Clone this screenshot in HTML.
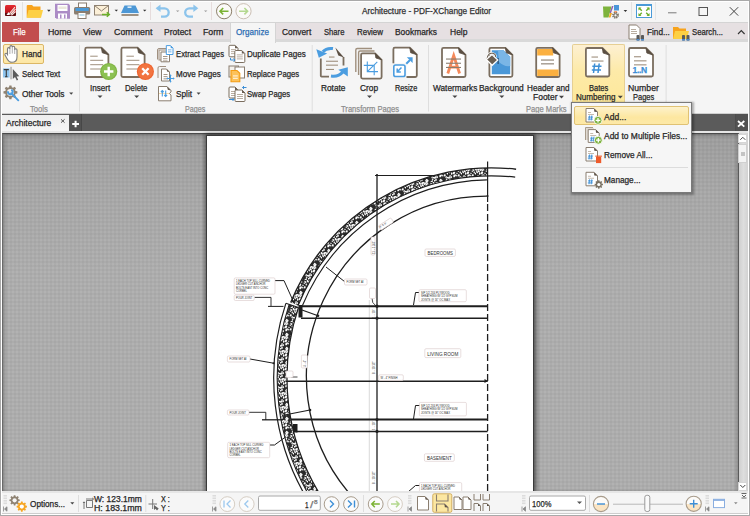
<!DOCTYPE html>
<html><head><meta charset="utf-8">
<style>
*{margin:0;padding:0;box-sizing:border-box}
html,body{width:750px;height:516px;overflow:hidden;background:#f5f5f5;font-family:"Liberation Sans",sans-serif;color:#262626}
.a{position:absolute}
.t{position:absolute;white-space:nowrap;transform-origin:0 0;-webkit-text-stroke:0.25px currentColor}
svg{position:absolute;overflow:visible}
</style></head><body>

<div class="a" style="left:0;top:0;width:750px;height:516px;border:1px solid #a9a9a9"></div>
<div class="a" style="left:1px;top:1px;width:748px;height:514px;border:1px solid #fff"></div>
<svg style="left:0;top:0" width="750" height="22" viewBox="0 0 750 22">
 <defs>
  <linearGradient id="appg" x1="0" y1="0" x2="0" y2="1"><stop offset="0" stop-color="#e42a30"/><stop offset="0.55" stop-color="#c41a20"/><stop offset="1" stop-color="#8a1014"/></linearGradient>
 </defs>
 <rect x="5" y="5" width="11" height="11" rx="1.5" fill="url(#appg)"/>
 <path d="M5 13 L16 13 L16 14.5 Q16 16 14.5 16 L6.5 16 Q5 16 5 14.5Z" fill="#5e0a0e"/>
 <path d="M9 14 L15 7.2 M10.5 14.5 L15.5 9.2 M11.5 15.3 L15.5 11.5" stroke="#f6e6e0" stroke-width="1.1"/>
 <path d="M6.5 15 L8.5 12 L10 15Z" fill="#fff"/>
 <rect x="22" y="2" width="1" height="18" fill="#e2e2e2"/>
 <!-- folder -->
 <path d="M26.7 6 Q26.7 5 27.7 5 L32 5 L33.5 6.5 L40.5 6.5 L40.5 17.5 L26.7 17.5Z" fill="#f7a31c"/>
 <path d="M28.5 10 L43 10 L41 17.7 L26.7 17.7Z" fill="#fdd043"/>
 <path d="M47 9.7 L50.7 9.7 L48.85 11.7Z" fill="#333"/>
 <!-- save -->
 <path d="M55 3.7 L68.5 3.7 L70 5.2 L70 18.7 L56.5 18.7 L55 17.2Z" fill="#ac8cc6"/>
 <rect x="57.5" y="5" width="10" height="6" fill="#fff"/>
 <rect x="58.5" y="6.5" width="8" height="2.5" fill="#ebe8dc"/>
 <rect x="58" y="13.5" width="9" height="5.2" fill="#fff"/>
 <rect x="60" y="14.5" width="1.5" height="4" fill="#ac8cc6"/><rect x="64" y="14.5" width="1.5" height="4" fill="#ac8cc6"/>
 <!-- print -->
 <rect x="78.5" y="3" width="8" height="5" fill="#fff" stroke="#8a7e70" stroke-width="1"/>
 <rect x="74" y="7" width="16.2" height="7.5" rx="1.5" fill="#8a7e70"/>
 <rect x="75.5" y="8" width="13.2" height="3" fill="#4a9ad8"/>
 <rect x="78" y="12.5" width="8" height="6" fill="#fff" stroke="#8a7e70" stroke-width="1"/>
 <rect x="79.5" y="14" width="5" height="2" fill="#bfe0f0"/>
 <!-- email -->
 <rect x="94.5" y="5.5" width="14" height="9.5" fill="#fcf0d8" stroke="#8f8272" stroke-width="1"/>
 <path d="M94.5 5.5 L101.5 11 L108.5 5.5" fill="none" stroke="#8f8272" stroke-width="1"/>
 <path d="M102 14.5 L109 14.5 M106.8 12.3 L109.3 14.5 L106.8 16.7" fill="none" stroke="#6bb02a" stroke-width="1.5"/>
 <path d="M114.6 9.8 L118 9.8 L116.3 11.6Z" fill="#333"/>
 <!-- scanner -->
 <path d="M124.5 5.5 L135.5 5.5 L139 13 L121 13Z" fill="#4d98d6"/>
 <rect x="127.5" y="6.5" width="4" height="1.3" fill="#fff"/>
 <rect x="121" y="13" width="18" height="1.2" fill="#e8f2fa"/>
 <rect x="121.5" y="14.2" width="17" height="1.6" fill="#8a7a66"/>
 <path d="M143 9.8 L146.4 9.8 L144.7 11.6Z" fill="#333"/>
 <rect x="150" y="2" width="1" height="18" fill="#e6dcdc"/>
 <!-- undo -->
 <path d="M157.5 8.3 L164.5 8.3 A4.2 4.2 0 0 1 164.5 16.7 L161 16.7" fill="none" stroke="#8cc4ec" stroke-width="2.3"/>
 <path d="M155.6 8.3 L160.5 4.5 L160.5 12.1Z" fill="#8cc4ec"/>
 <path d="M176 10.5 L179.4 10.5 L177.7 12.1Z" fill="#999"/>
 <!-- redo -->
 <path d="M196.4 8.3 L189.4 8.3 A4.2 4.2 0 0 0 189.4 16.7 L193 16.7" fill="none" stroke="#8cc4ec" stroke-width="2.3"/>
 <path d="M198.3 8.3 L193.4 4.5 L193.4 12.1Z" fill="#8cc4ec"/>
 <path d="M204 10.5 L207.4 10.5 L205.7 12.1Z" fill="#999"/>
 <rect x="211" y="2" width="1" height="18" fill="#e6dcdc"/>
 <!-- back/forward -->
 <circle cx="224.1" cy="11.2" r="7.6" fill="#fbfaf8" stroke="#8c7f6a" stroke-width="1"/>
 <path d="M220 11.2 L228.5 11.2 M223.2 8 L220 11.2 L223.2 14.4" fill="none" stroke="#7bb233" stroke-width="1.6"/>
 <circle cx="243.5" cy="11.2" r="7.6" fill="#fbfaf8" stroke="#cbbfb4" stroke-width="1"/>
 <path d="M247.6 11.2 L239.1 11.2 M244.4 8 L247.6 11.2 L244.4 14.4" fill="none" stroke="#b4d890" stroke-width="1.6"/>
 <!-- right icons -->
 <path d="M603 6.5 L611.5 6.5 L608.5 17.5 L603.5 17.5Z" fill="#7db33c"/>
 <path d="M612 6 L613.5 6 L611 13 L609.5 13Z" fill="#8d5fb0"/>
 <rect x="614" y="5" width="5" height="5.5" fill="#4b96d8"/>
 <path d="M610 13 L612 13 L610.5 17.5 L608.8 17.5Z" fill="#f6a51c"/>
 <rect x="614" y="11" width="3" height="2" fill="#f7a070"/>
 <g transform="translate(615.5,15.3)"><circle r="2.6" fill="none" stroke="#7a7264" stroke-width="1.6" stroke-dasharray="1.3 0.75"/><circle r="1.6" fill="none" stroke="#7a7264" stroke-width="1"/></g>
 <path d="M623.6 10 L627.2 10 L625.4 12Z" fill="#333"/>
 <rect x="631" y="2" width="1" height="18" fill="#e2e2e2"/>
 <rect x="636.5" y="4.5" width="15" height="13" fill="#fff" stroke="#4a9ad8" stroke-width="1"/>
 <rect x="636.5" y="4.5" width="15" height="1.5" fill="#4a9ad8"/>
 <path d="M638.5 7.5 L641.5 7.5 L638.5 10.5Z M649.5 7.5 L646.5 7.5 L649.5 10.5Z M638.5 16 L641.5 16 L638.5 13Z M649.5 16 L646.5 16 L649.5 13Z" fill="#6cae2c"/>
 <path d="M639 8 L641.8 10.8 M649 8 L646.2 10.8 M639 15.5 L641.8 12.7 M649 15.5 L646.2 12.7" stroke="#6cae2c" stroke-width="1.4"/>
 <rect x="655" y="2" width="1" height="18" fill="#e6e6e6"/>
 <rect x="668" y="12.3" width="8.5" height="1" fill="#7a7a7a"/>
 <rect x="699" y="7.5" width="8.5" height="8" fill="none" stroke="#555" stroke-width="1"/>
 <path d="M729.8 7.2 L738.2 15.6 M738.2 7.2 L729.8 15.6" stroke="#444" stroke-width="1"/>
</svg>
<div class="t" style="left:362.40px;top:6.97px;font-size:8.90px;line-height:8.90px;color:#303030;font-weight:normal;transform:scaleX(0.9314);">Architecture - PDF-XChange Editor</div>
<div class="a" style="left:2px;top:22px;width:746px;height:1px;background:#d4d4d4"></div>
<div class="a" style="left:2px;top:23px;width:746px;height:16px;background:#e6e0e2"></div>
<div class="a" style="left:2px;top:39px;width:746px;height:3px;background:#d9d9d9"></div>
<div class="a" style="left:2px;top:22px;width:37px;height:20px;background:#c24e4e"></div>
<div class="a" style="left:230px;top:22px;width:45.5px;height:21px;background:#f5f5f5;border:1px solid #d4d4d4;border-bottom:none"></div>
<div class="t" style="left:13.40px;top:28.38px;font-size:9.00px;line-height:9.00px;color:#ffffff;font-weight:normal;transform:scaleX(0.8818);">File</div>
<div class="t" style="left:47.50px;top:28.38px;font-size:9.00px;line-height:9.00px;color:#262626;font-weight:normal;transform:scaleX(0.9785);">Home</div>
<div class="t" style="left:83.20px;top:28.38px;font-size:9.00px;line-height:9.00px;color:#262626;font-weight:normal;transform:scaleX(0.9608);">View</div>
<div class="t" style="left:113.60px;top:28.38px;font-size:9.00px;line-height:9.00px;color:#262626;font-weight:normal;transform:scaleX(0.9842);">Comment</div>
<div class="t" style="left:164.00px;top:28.38px;font-size:9.00px;line-height:9.00px;color:#262626;font-weight:normal;transform:scaleX(0.9468);">Protect</div>
<div class="t" style="left:203.00px;top:28.38px;font-size:9.00px;line-height:9.00px;color:#262626;font-weight:normal;transform:scaleX(0.9714);">Form</div>
<div class="t" style="left:281.80px;top:28.38px;font-size:9.00px;line-height:9.00px;color:#262626;font-weight:normal;transform:scaleX(0.9265);">Convert</div>
<div class="t" style="left:323.60px;top:28.38px;font-size:9.00px;line-height:9.00px;color:#262626;font-weight:normal;transform:scaleX(0.8489);">Share</div>
<div class="t" style="left:357.00px;top:28.38px;font-size:9.00px;line-height:9.00px;color:#262626;font-weight:normal;transform:scaleX(0.8809);">Review</div>
<div class="t" style="left:395.00px;top:28.38px;font-size:9.00px;line-height:9.00px;color:#262626;font-weight:normal;transform:scaleX(0.9330);">Bookmarks</div>
<div class="t" style="left:449.50px;top:28.38px;font-size:9.00px;line-height:9.00px;color:#262626;font-weight:normal;transform:scaleX(0.9451);">Help</div>
<div class="t" style="left:646.50px;top:28.38px;font-size:9.00px;line-height:9.00px;color:#262626;font-weight:normal;transform:scaleX(0.9154);">Find...</div>
<div class="t" style="left:691.60px;top:28.38px;font-size:9.00px;line-height:9.00px;color:#262626;font-weight:normal;transform:scaleX(0.8604);">Search...</div>
<div class="t" style="left:236.20px;top:28.38px;font-size:9.00px;line-height:9.00px;color:#2b6cb3;font-weight:normal;transform:scaleX(0.9033);">Organize</div>
<svg style="left:0;top:0" width="750" height="45">
 <path d="M629 25 L636.5 25 L640 28.5 L640 39 L629 39 Z" fill="#fff" stroke="#8a7e70" stroke-width="1"/>
 <rect x="631" y="29" width="5" height="0.8" fill="#a89a8a"/><rect x="631" y="31" width="6" height="0.8" fill="#a89a8a"/><rect x="631" y="33" width="6" height="0.8" fill="#a89a8a"/>
 <rect x="636.5" y="35" width="3" height="5.5" rx="0.8" fill="#5a5a5a"/><rect x="641" y="35" width="3" height="5.5" rx="0.8" fill="#5a5a5a"/>
 <rect x="636.5" y="39" width="3" height="1.5" fill="#4a8ad0"/><rect x="641" y="39" width="3" height="1.5" fill="#4a8ad0"/>
 <path d="M673 27 L678 27 L679.5 28.5 L686 28.5 L686 39 L673 39Z" fill="#f7a31c"/>
 <path d="M675 31 L689 31 L687 39 L673 39Z" fill="#fdd043"/>
 <rect x="682" y="35" width="3" height="5.5" rx="0.8" fill="#5a5a5a"/><rect x="686.5" y="35" width="3" height="5.5" rx="0.8" fill="#5a5a5a"/>
 <rect x="682" y="39" width="3" height="1.5" fill="#4a8ad0"/><rect x="686.5" y="39" width="3" height="1.5" fill="#4a8ad0"/>
 <path d="M738 34 L741.3 30.5 L744.6 34" fill="none" stroke="#333" stroke-width="1.1"/>
</svg>
<div class="a" style="left:2px;top:113px;width:746px;height:2px;background:#d6d6d6"></div>
<div class="a" style="left:2.5px;top:44.4px;width:41.5px;height:19.2px;border:1px solid #dcb765;border-radius:2px;background:linear-gradient(#fdefc4,#fde7a4)"></div>
<div class="a" style="left:571.7px;top:44.3px;width:53px;height:58.7px;border:1px solid #e6cf94;border-bottom:none;border-radius:2px 2px 0 0;background:linear-gradient(#fdf0d2 0%,#fdeaa8 45%,#fde89a 100%)"></div>
<svg style="left:0;top:0" width="750" height="115">
<rect x="79.0" y="45" width="1" height="66.5" fill="#dedede"/>
<rect x="311.7" y="45" width="1" height="66.5" fill="#dedede"/>
<rect x="428.0" y="45" width="1" height="66.5" fill="#dedede"/>
<rect x="665.6" y="45" width="1" height="66.5" fill="#dedede"/>
<path d="M7.5 53 L7.5 49 Q7.5 47.6 8.7 47.6 Q9.9 47.6 9.9 49 L9.9 47 Q9.9 45.6 11.1 45.6 Q12.3 45.6 12.3 47 L12.3 47.5 Q12.3 46.3 13.5 46.3 Q14.7 46.3 14.7 47.6 L14.7 50 Q14.7 48.8 15.8 48.8 Q17 48.8 17 50 L17 57 Q17 62.3 12 62.3 Q9 62.3 7.5 59.5 L5 55 Q4.6 53.8 5.6 53.4 Q6.6 53 7.5 54.5 Z" fill="#fff" stroke="#7c7c7c" stroke-width="1.1"/>
<path d="M9.9 49 L9.9 54 M12.3 47.5 L12.3 53.5 M14.7 50 L14.7 54" stroke="#9a9a9a" stroke-width="0.8"/>
<rect x="3" y="68.4" width="6.6" height="9.1" fill="#8ec4ee"/>
<path d="M3.8 69.6 L8.8 69.6 M6.3 69.6 L6.3 76.8 M5 76.8 L7.6 76.8" stroke="#3a3a3a" stroke-width="1.1" fill="none"/>
<rect x="10.3" y="66.8" width="1.5" height="12.5" fill="#b0b0b0"/>
<path d="M12.8 69 L12.8 79 L15 77 L16.8 80.5 L18.2 79.8 L16.5 76.5 L19.3 76.3 Z" fill="#5a5a5a"/>
<path d="M15.51 90.99 L17.32 91.35 L17.32 93.45 L15.51 93.81 L15.01 95.01 L16.04 96.55 L14.55 98.04 L13.01 97.01 L11.81 97.51 L11.45 99.32 L9.35 99.32 L8.99 97.51 L7.79 97.01 L6.25 98.04 L4.76 96.55 L5.79 95.01 L5.29 93.81 L3.48 93.45 L3.48 91.35 L5.29 90.99 L5.79 89.79 L4.76 88.25 L6.25 86.76 L7.79 87.79 L8.99 87.29 L9.35 85.48 L11.45 85.48 L11.81 87.29 L13.01 87.79 L14.55 86.76 L16.04 88.25 L15.01 89.79Z" fill="#8f8373"/><circle cx="10.40" cy="92.40" r="3.40" fill="#f5f5f5"/>
<path d="M11.2 93.2 L18.3 100.3" stroke="#4b9de0" stroke-width="1.9" stroke-linecap="round"/>
<path d="M8.2 91.2 A2.3 2.3 0 1 0 11.2 89.8" fill="none" stroke="#4b9de0" stroke-width="1.9"/>
<path d="M69.20 92.50 L73.20 92.50 L71.20 94.70Z" fill="#444"/>
<path d="M196.60 92.50 L200.60 92.50 L198.60 94.70Z" fill="#444"/>
<path d="M86.70 47.70 L101.40 47.70 L108.40 54.70 L108.40 75.50 Q108.40 77.00 106.90 77.00 L86.70 77.00 Q85.20 77.00 85.20 75.50 L85.20 49.20 Q85.20 47.70 86.70 47.70Z" fill="#fff" stroke="#7b6e5f" stroke-width="1.80" stroke-linejoin="round"/><rect x="90.2" y="55.7" width="7.5" height="1" fill="#a0907e"/><rect x="90.2" y="59.8" width="13" height="1" fill="#a0907e"/><rect x="90.2" y="64.2" width="13" height="1" fill="#a0907e"/><rect x="90.2" y="68.5" width="13" height="1" fill="#a0907e"/><path d="M101.40 47.70 L108.40 54.70 L102.24 52.74 Z" fill="#5b4f43" stroke="#5b4f43" stroke-width="0.8" stroke-linejoin="round"/>
<path d="M122.90 47.70 L137.60 47.70 L144.60 54.70 L144.60 75.50 Q144.60 77.00 143.10 77.00 L122.90 77.00 Q121.40 77.00 121.40 75.50 L121.40 49.20 Q121.40 47.70 122.90 47.70Z" fill="#fff" stroke="#7b6e5f" stroke-width="1.80" stroke-linejoin="round"/><rect x="126.4" y="55.7" width="7.5" height="1" fill="#a0907e"/><rect x="126.4" y="59.8" width="13" height="1" fill="#a0907e"/><rect x="126.4" y="64.2" width="13" height="1" fill="#a0907e"/><rect x="126.4" y="68.5" width="13" height="1" fill="#a0907e"/><path d="M137.60 47.70 L144.60 54.70 L138.44 52.74 Z" fill="#5b4f43" stroke="#5b4f43" stroke-width="0.8" stroke-linejoin="round"/>
<circle cx="108.7" cy="71.5" r="8.6" fill="#7fb341"/><circle cx="108.7" cy="71.5" r="7.4" fill="#8cc152"/>
<path d="M104 71.5 L113.4 71.5 M108.7 66.8 L108.7 76.2" stroke="#fff" stroke-width="2.4"/>
<circle cx="145.4" cy="71.5" r="8.6" fill="#ee6530"/><circle cx="145.4" cy="71.5" r="7.4" fill="#f27440"/>
<path d="M142.2 68.3 L148.6 74.7 M148.6 68.3 L142.2 74.7" stroke="#fff" stroke-width="2.3"/>
<path d="M97.50 95.50 L102.50 95.50 L100.00 98.10Z" fill="#444"/>
<path d="M134.20 95.50 L139.20 95.50 L136.70 98.10Z" fill="#444"/>
<path d="M157.5 59.5 L157.5 50 Q157.5 48.5 159 48.5 L166 48.5" fill="none" stroke="#a09080" stroke-width="1"/>
<rect x="159" y="50" width="8" height="10" fill="#f6f3ee" stroke="#a09080" stroke-width="1"/>
<path d="M161.0 52.0 L167.5 52.0 L169.5 54.0 L169.5 61.8 L161.0 61.8 Z" fill="#fff" stroke="#8a7e70" stroke-width="1.0" stroke-linejoin="round"/><rect x="163.0" y="56.1" width="4.5" height="0.9" fill="#9a8c7c"/><rect x="163.0" y="58.3" width="4.5" height="0.9" fill="#9a8c7c"/><rect x="163.0" y="60.5" width="4.5" height="0.9" fill="#9a8c7c"/>
<path d="M166.3 45.6 L170.5 45.6 L173.0 48.1 L173.0 54.5 L166.3 54.5 Z" fill="#fff" stroke="#4b9de0" stroke-width="1.0" stroke-linejoin="round"/>
<path d="M170.5 45.6 L173 48.1 L170.8 48.3Z" fill="#4b9de0"/><rect x="168" y="49.5" width="3.5" height="0.8" fill="#4b9de0"/><rect x="168" y="51.5" width="3.5" height="0.8" fill="#4b9de0"/>
<path d="M158 78 L158 68 Q158 66.5 159.5 66.5 L166 66.5" fill="none" stroke="#a09080" stroke-width="1"/>
<path d="M161.5 69.0 L166.5 69.0 L169.5 72.0 L169.5 81.0 L161.5 81.0 Z" fill="#fff" stroke="#8a7e70" stroke-width="1.0" stroke-linejoin="round"/><path d="M166.5 69.0 L169.5 72.0 L167.1 71.4 Z" fill="#5b4f43"/><rect x="163.5" y="74.0" width="4.0" height="0.9" fill="#9a8c7c"/><rect x="163.5" y="76.2" width="4.0" height="0.9" fill="#9a8c7c"/><rect x="163.5" y="78.4" width="4.0" height="0.9" fill="#9a8c7c"/>
<path d="M167 78.5 L174 78.5 M170.5 75 L170.5 82" stroke="#4b9de0" stroke-width="1"/>
<path d="M166.3 78.5 L167.8 77.3 L167.8 79.7Z M174.7 78.5 L173.2 77.3 L173.2 79.7Z M170.5 74.3 L169.3 75.8 L171.7 75.8Z M170.5 82.7 L169.3 81.2 L171.7 81.2Z" fill="#4b9de0"/>
<path d="M158.5 86.5 L167 86.5 L171 90.5 L171 92 L169.3 93.5 L171 95 L171 100.8 L158.5 100.8 Z" fill="#fff" stroke="#8a7e70" stroke-width="1"/>
<path d="M167 86.5 L171 90.5 L167.8 89.8Z" fill="#5b4f43"/>
<path d="M159.5 93.5 L168.5 93.5" stroke="#f6a623" stroke-width="0.8" stroke-dasharray="1 1"/>
<path d="M162.3 96.5 L162.3 90.5 M160.9 92 L162.3 90.5 L163.7 92 M165.7 90.5 L165.7 96.5 M164.3 95 L165.7 96.5 L167.1 95" stroke="#4b9de0" stroke-width="1.1" fill="none"/>
<path d="M230.00 45.30 L235.00 45.30 L238.00 48.30 L238.00 55.80 Q238.00 56.80 237.00 56.80 L230.00 56.80 Q229.00 56.80 229.00 55.80 L229.00 46.30 Q229.00 45.30 230.00 45.30Z" fill="#fff" stroke="#7b6e5f" stroke-width="1.00"/><path d="M235.00 45.30 L238.00 48.30 L235.00 48.30 Z" fill="#6a5e52"/><rect x="231.00" y="49.30" width="5.00" height="0.8" fill="#a89a8a"/><rect x="231.00" y="51.30" width="5.00" height="0.8" fill="#a89a8a"/><rect x="231.00" y="53.30" width="5.00" height="0.8" fill="#a89a8a"/>
<path d="M235.80 50.50 L241.80 50.50 L244.80 53.50 L244.80 61.50 Q244.80 62.50 243.80 62.50 L235.80 62.50 Q234.80 62.50 234.80 61.50 L234.80 51.50 Q234.80 50.50 235.80 50.50Z" fill="#fff" stroke="#7b6e5f" stroke-width="1.00"/><path d="M241.80 50.50 L244.80 53.50 L241.80 53.50 Z" fill="#6a5e52"/><rect x="236.80" y="54.50" width="6.00" height="0.8" fill="#a89a8a"/><rect x="236.80" y="56.50" width="6.00" height="0.8" fill="#a89a8a"/><rect x="236.80" y="58.50" width="6.00" height="0.8" fill="#a89a8a"/>
<path d="M230.5 58 L230.5 60 L235 60 M233.5 58.5 L235 60 L233.5 61.5" stroke="#3d8fd6" stroke-width="1" fill="none"/>
<rect x="229" y="66" width="9.5" height="11" fill="#f4f1ec" stroke="#8a7e70" stroke-width="1"/>
<rect x="235" y="67" width="9.5" height="11" fill="#fff" stroke="#8a7e70" stroke-width="1"/>
<path d="M231 70.5 L237 70.5 L239.8 73.3 L239.8 81.8 L231 81.8 Z" fill="#fcc25a" stroke="#f39c12" stroke-width="1.1"/>
<rect x="233" y="75.5" width="4.8" height="0.9" fill="#fff"/><rect x="233" y="77.8" width="4.8" height="0.9" fill="#fff"/>
<path d="M230.00 87.00 L235.00 87.00 L238.00 90.00 L238.00 97.00 Q238.00 98.00 237.00 98.00 L230.00 98.00 Q229.00 98.00 229.00 97.00 L229.00 88.00 Q229.00 87.00 230.00 87.00Z" fill="#fff" stroke="#7b6e5f" stroke-width="1.00"/><path d="M235.00 87.00 L238.00 90.00 L235.00 90.00 Z" fill="#6a5e52"/><rect x="231.00" y="91.00" width="5.00" height="0.8" fill="#a89a8a"/><rect x="231.00" y="93.00" width="5.00" height="0.8" fill="#a89a8a"/><rect x="231.00" y="95.00" width="5.00" height="0.8" fill="#a89a8a"/>
<path d="M236.00 90.00 L242.00 90.00 L245.00 93.00 L245.00 100.50 Q245.00 101.50 244.00 101.50 L236.00 101.50 Q235.00 101.50 235.00 100.50 L235.00 91.00 Q235.00 90.00 236.00 90.00Z" fill="#fff" stroke="#7b6e5f" stroke-width="1.00"/><path d="M242.00 90.00 L245.00 93.00 L242.00 93.00 Z" fill="#6a5e52"/><rect x="237.00" y="94.00" width="6.00" height="0.8" fill="#a89a8a"/><rect x="237.00" y="96.00" width="6.00" height="0.8" fill="#a89a8a"/><rect x="237.00" y="98.00" width="6.00" height="0.8" fill="#a89a8a"/>
<path d="M242.5 87.5 L246.5 87.5 M244 86 L242.5 87.5 L244 89" stroke="#3d8fd6" stroke-width="1" fill="none"/>
<path d="M229 99.5 L234 99.5 M232.5 98 L234 99.5 L232.5 101" stroke="#3d8fd6" stroke-width="1" fill="none"/>
<path d="M320.8 58.5 L320.8 75.8 Q320.8 76.6 321.6 76.6 L329 76.6 M343.5 57 L343.5 65.5" stroke="#7b6e5f" stroke-width="1.8" fill="none"/>
<path d="M335.3 47.6 L344 57.4 L338.3 55.6 Z" fill="#5b4f43"/>
<rect x="329.0" y="56.5" width="5.5" height="1.1" fill="#a0907e"/>
<rect x="326.0" y="60.7" width="12.0" height="1.1" fill="#a0907e"/>
<rect x="326.0" y="64.6" width="12.0" height="1.1" fill="#a0907e"/>
<rect x="326.0" y="68.9" width="8.0" height="1.1" fill="#a0907e"/>
<path d="M333 48.6 Q326.5 47.6 322.8 51.8" fill="none" stroke="#4b9de0" stroke-width="3"/>
<path d="M316.3 49.3 L327.2 53.6 L318.8 57.8 Z" fill="#4b9de0"/>
<path d="M331 76 Q338.5 77.2 342.8 72" fill="none" stroke="#4b9de0" stroke-width="3"/>
<path d="M347.8 67.3 L338.3 69.8 L347.8 76.6 Z" fill="#4b9de0"/>
<path d="M355.8 72 L355.8 50 Q355.8 48.5 357.3 48.5 L372 48.5" stroke="#a0907e" stroke-width="1.4" fill="none"/>
<path d="M358.6 75 L358.6 52.5 Q358.6 51 360.1 51 L374.5 51" stroke="#a0907e" stroke-width="1.4" fill="none"/>
<path d="M362.60 53.30 L375.10 53.30 L381.60 59.80 L381.60 77.10 Q381.60 78.60 380.10 78.60 L362.60 78.60 Q361.10 78.60 361.10 77.10 L361.10 54.80 Q361.10 53.30 362.60 53.30Z" fill="#fff" stroke="#7b6e5f" stroke-width="1.80" stroke-linejoin="round"/><path d="M367.3 61.5 L367.3 71.6 L378 71.6 M363.8 65.4 L374.2 65.4 L374.2 75.2 M367.3 71.6 L377.3 61.8" stroke="#4b9de0" stroke-width="1.1" fill="none"/><path d="M375.10 53.30 L381.60 59.80 L375.88 57.98 Z" fill="#5b4f43" stroke="#5b4f43" stroke-width="0.8" stroke-linejoin="round"/>
<path d="M394.90 47.70 L409.80 47.70 L416.80 54.70 L416.80 75.50 Q416.80 77.00 415.30 77.00 L394.90 77.00 Q393.40 77.00 393.40 75.50 L393.40 49.20 Q393.40 47.70 394.90 47.70Z" fill="#fff" stroke="#7b6e5f" stroke-width="1.80" stroke-linejoin="round"/><path d="M409.80 47.70 L416.80 54.70 L410.64 52.74 Z" fill="#5b4f43" stroke="#5b4f43" stroke-width="0.8" stroke-linejoin="round"/>
<rect x="392" y="63.3" width="14.5" height="15" fill="#f5f5f5"/>
<rect x="393.8" y="65" width="11.2" height="11.5" rx="1.8" fill="#fff" stroke="#4b9de0" stroke-width="1.6"/>
<path d="M401.5 67.5 L398 71 M397.2 68.5 L397.2 72 L400.8 72" stroke="#4b9de0" stroke-width="1.5" fill="none"/>
<path d="M406.3 63.8 L410 60" stroke="#4b9de0" stroke-width="2"/><path d="M406.8 57.3 L412.6 57.3 L412.6 63 Z" fill="#4b9de0"/>
<path d="M443.50 47.80 L458.50 47.80 L465.50 54.80 L465.50 75.50 Q465.50 77.00 464.00 77.00 L443.50 77.00 Q442.00 77.00 442.00 75.50 L442.00 49.30 Q442.00 47.80 443.50 47.80Z" fill="#fff" stroke="#7b6e5f" stroke-width="1.80" stroke-linejoin="round"/><path d="M447.8 73.5 L453.7 55.5 L459.6 73.5 M449.5 67.2 L458 67.2" stroke="#f5895a" stroke-width="2.8" fill="none"/><rect x="446" y="58.5" width="15" height="1.1" fill="#8a7e70"/><rect x="446" y="62.7" width="15" height="1.1" fill="#8a7e70"/><rect x="446" y="66.9" width="15" height="1.1" fill="#8a7e70"/><path d="M458.50 47.80 L465.50 54.80 L459.34 52.84 Z" fill="#5b4f43" stroke="#5b4f43" stroke-width="0.8" stroke-linejoin="round"/>
<path d="M490.90 47.80 L505.40 47.80 L512.40 54.80 L512.40 75.30 Q512.40 76.80 510.90 76.80 L490.90 76.80 Q489.40 76.80 489.40 75.30 L489.40 49.30 Q489.40 47.80 490.90 47.80Z" fill="#fff" stroke="#7b6e5f" stroke-width="1.80" stroke-linejoin="round"/><path d="M491.8 50.2 L503.5 50.2 L510.2 56.8 L510.2 74.3 L491.8 74.3 Z" fill="#4a98d8"/><path d="M498 50.2 L503.5 50.2 L510.2 56.8 L510.2 66 Q504 67 499 62 Z" fill="#7ab6e6"/><rect x="497.5" y="58" width="1.2" height="6" fill="#2a4a6a"/><path d="M505.40 47.80 L512.40 54.80 L506.24 52.84 Z" fill="#5b4f43" stroke="#5b4f43" stroke-width="0.8" stroke-linejoin="round"/>
<path d="M487 59 Q488 52.5 492.5 53.3 Q496 54 495.5 57" fill="none" stroke="#fff" stroke-width="2.2"/>
<path d="M487 59 Q488 52.5 492.5 53.3 Q496 54 495.5 57" fill="none" stroke="#6a5f52" stroke-width="1.1"/>
<path d="M486.3 59.5 L492 54.5 L497.8 60 L492.2 65.3 Z" fill="#6a5f52" stroke="#fff" stroke-width="1.2"/>
<path d="M537.70 47.80 L552.60 47.80 L559.60 54.80 L559.60 75.50 Q559.60 77.00 558.10 77.00 L537.70 77.00 Q536.20 77.00 536.20 75.50 L536.20 49.30 Q536.20 47.80 537.70 47.80Z" fill="#fff" stroke="#7b6e5f" stroke-width="1.80" stroke-linejoin="round"/><rect x="537.2" y="49" width="16" height="6.5" fill="#fbb040"/><rect x="537.2" y="69.5" width="21.4" height="6.5" fill="#fbb040"/><rect x="541" y="59.5" width="13" height="1.1" fill="#8a7e70"/><rect x="541" y="63.3" width="13" height="1.1" fill="#8a7e70"/><path d="M552.60 47.80 L559.60 54.80 L553.44 52.84 Z" fill="#5b4f43" stroke="#5b4f43" stroke-width="0.8" stroke-linejoin="round"/>
<path d="M587.40 48.00 L602.30 48.00 L609.30 55.00 L609.30 75.00 Q609.30 76.50 607.80 76.50 L587.40 76.50 Q585.90 76.50 585.90 75.00 L585.90 49.50 Q585.90 48.00 587.40 48.00Z" fill="#fff" stroke="#7b6e5f" stroke-width="1.80" stroke-linejoin="round"/><rect x="591.5" y="56.5" width="6.5" height="1.1" fill="#a0907e"/><rect x="591.5" y="60.5" width="12" height="1.1" fill="#a0907e"/><path d="M594.7 63.5 L593.5 73 M599.2 63.5 L598 73 M592.3 66.3 L601.5 66.3 M591.8 70 L601 70" stroke="#3d8fd6" stroke-width="1.5"/><path d="M602.30 48.00 L609.30 55.00 L603.14 53.04 Z" fill="#5b4f43" stroke="#5b4f43" stroke-width="0.8" stroke-linejoin="round"/>
<path d="M630.50 48.00 L646.00 48.00 L653.00 55.00 L653.00 75.00 Q653.00 76.50 651.50 76.50 L630.50 76.50 Q629.00 76.50 629.00 75.00 L629.00 49.50 Q629.00 48.00 630.50 48.00Z" fill="#fff" stroke="#7b6e5f" stroke-width="1.80" stroke-linejoin="round"/><rect x="634" y="56.2" width="7" height="1.1" fill="#a0907e"/><rect x="634" y="60.3" width="12.5" height="1.1" fill="#a0907e"/><rect x="634" y="64.3" width="12.5" height="1.1" fill="#a0907e"/><path d="M646.00 48.00 L653.00 55.00 L646.84 53.04 Z" fill="#5b4f43" stroke="#5b4f43" stroke-width="0.8" stroke-linejoin="round"/>
</svg>
<div class="t" style="left:632.5px;top:65.5px;font-size:8.5px;line-height:9px;color:#3d8fd6;font-weight:bold;letter-spacing:-0.3px">1..N</div>
<div class="t" style="left:22.00px;top:50.48px;font-size:9.00px;line-height:9.00px;color:#262626;font-weight:normal;transform:scaleX(0.9156);">Hand</div>
<div class="t" style="left:22.00px;top:70.48px;font-size:9.00px;line-height:9.00px;color:#262626;font-weight:normal;transform:scaleX(0.8710);">Select Text</div>
<div class="t" style="left:22.00px;top:89.88px;font-size:9.00px;line-height:9.00px;color:#262626;font-weight:normal;transform:scaleX(0.9267);">Other Tools</div>
<div class="t" style="left:175.60px;top:50.48px;font-size:9.00px;line-height:9.00px;color:#262626;font-weight:normal;transform:scaleX(0.8567);">Extract Pages</div>
<div class="t" style="left:175.60px;top:70.48px;font-size:9.00px;line-height:9.00px;color:#262626;font-weight:normal;transform:scaleX(0.8954);">Move Pages</div>
<div class="t" style="left:175.60px;top:89.88px;font-size:9.00px;line-height:9.00px;color:#262626;font-weight:normal;transform:scaleX(0.9135);">Split</div>
<div class="t" style="left:246.60px;top:50.48px;font-size:9.00px;line-height:9.00px;color:#262626;font-weight:normal;transform:scaleX(0.8955);">Duplicate Pages</div>
<div class="t" style="left:246.60px;top:70.48px;font-size:9.00px;line-height:9.00px;color:#262626;font-weight:normal;transform:scaleX(0.8551);">Replace Pages</div>
<div class="t" style="left:246.60px;top:89.88px;font-size:9.00px;line-height:9.00px;color:#262626;font-weight:normal;transform:scaleX(0.8527);">Swap Pages</div>
<div class="t" style="left:29.70px;top:104.88px;font-size:9.00px;line-height:9.00px;color:#8e8e8e;font-weight:normal;transform:scaleX(0.8517);">Tools</div>
<div class="t" style="left:185.20px;top:104.88px;font-size:9.00px;line-height:9.00px;color:#8e8e8e;font-weight:normal;transform:scaleX(0.7912);">Pages</div>
<div class="t" style="left:340.50px;top:104.88px;font-size:9.00px;line-height:9.00px;color:#8e8e8e;font-weight:normal;transform:scaleX(0.8442);">Transform Pages</div>
<div class="t" style="left:526.30px;top:104.88px;font-size:9.00px;line-height:9.00px;color:#8e8e8e;font-weight:normal;transform:scaleX(0.8432);">Page Marks</div>
<div class="t" style="left:89.80px;top:84.18px;font-size:9.00px;line-height:9.00px;color:#262626;font-weight:normal;transform:scaleX(0.9016);">Insert</div>
<div class="t" style="left:125.40px;top:84.18px;font-size:9.00px;line-height:9.00px;color:#262626;font-weight:normal;transform:scaleX(0.8610);">Delete</div>
<div class="t" style="left:320.70px;top:84.18px;font-size:9.00px;line-height:9.00px;color:#262626;font-weight:normal;transform:scaleX(0.9234);">Rotate</div>
<div class="t" style="left:360.40px;top:84.18px;font-size:9.00px;line-height:9.00px;color:#262626;font-weight:normal;transform:scaleX(0.9275);">Crop</div>
<div class="t" style="left:395.00px;top:84.18px;font-size:9.00px;line-height:9.00px;color:#262626;font-weight:normal;transform:scaleX(0.8104);">Resize</div>
<div class="t" style="left:432.50px;top:84.18px;font-size:9.00px;line-height:9.00px;color:#262626;font-weight:normal;transform:scaleX(0.9196);">Watermarks</div>
<div class="t" style="left:479.40px;top:84.18px;font-size:9.00px;line-height:9.00px;color:#262626;font-weight:normal;transform:scaleX(0.9324);">Background</div>
<div class="t" style="left:527.40px;top:84.18px;font-size:9.00px;line-height:9.00px;color:#262626;font-weight:normal;transform:scaleX(0.9055);">Header and</div>
<div class="t" style="left:532.70px;top:93.18px;font-size:9.00px;line-height:9.00px;color:#262626;font-weight:normal;transform:scaleX(0.9417);">Footer</div>
<div class="t" style="left:588.80px;top:84.18px;font-size:9.00px;line-height:9.00px;color:#262626;font-weight:normal;transform:scaleX(0.8342);">Bates</div>
<div class="t" style="left:576.00px;top:93.18px;font-size:9.00px;line-height:9.00px;color:#262626;font-weight:normal;transform:scaleX(0.8971);">Numbering</div>
<div class="t" style="left:627.80px;top:84.18px;font-size:9.00px;line-height:9.00px;color:#262626;font-weight:normal;transform:scaleX(0.9652);">Number</div>
<div class="t" style="left:632.50px;top:93.18px;font-size:9.00px;line-height:9.00px;color:#262626;font-weight:normal;transform:scaleX(0.8343);">Pages</div>
<svg style="left:0;top:0" width="750" height="115"><path d="M367.00 95.50 L372.00 95.50 L369.50 98.10Z" fill="#444"/><path d="M452.40 95.50 L457.40 95.50 L454.90 98.10Z" fill="#444"/><path d="M499.30 95.50 L504.30 95.50 L501.80 98.10Z" fill="#444"/><path d="M559.00 95.80 L564.00 95.80 L561.50 98.40Z" fill="#444"/><path d="M617.80 95.80 L622.80 95.80 L620.30 98.40Z" fill="#444"/></svg>
<div class="a" style="left:2px;top:113px;width:746px;height:1px;background:#cfcfcf"></div>
<div class="a" style="left:2px;top:114px;width:746px;height:17px;background:#5b5b5b"></div>
<div class="a" style="left:69px;top:114px;width:13.3px;height:17px;background:#525252;border-right:1px solid #474747"></div>
<div class="a" style="left:735px;top:114px;width:13px;height:17px;background:#525252;border-left:1px solid #4d4d4d"></div>
<div class="a" style="left:2px;top:115px;width:67px;height:16px;background:linear-gradient(#eeeeee,#f6f6f6)"></div>
<div class="t" style="left:6.00px;top:119.48px;font-size:9.00px;line-height:9.00px;color:#262626;font-weight:normal;transform:scaleX(0.9431);">Architecture</div>
<svg style="left:0;top:0" width="750" height="140">
<path d="M61 119.3 L64.6 122.7 M64.6 119.3 L61 122.7" stroke="#555" stroke-width="1"/>
<path d="M72.2 124 L79 124 M75.6 120.8 L75.6 127.2" stroke="#fff" stroke-width="2"/>
<path d="M738 121 L744.3 126.7 M744.3 121 L738 126.7" stroke="#fff" stroke-width="1.8"/>
</svg>
<div class="a" style="left:2px;top:131px;width:746px;height:2px;background:#e6e6e6"></div>
<div class="a" style="left:2px;top:133px;width:735.5px;height:358px;background-color:#acacac;background-image:linear-gradient(rgba(0,0,0,0.09),rgba(0,0,0,0.03) 60px,rgba(0,0,0,0) 140px),radial-gradient(rgba(255,255,255,0.08) 0.6px,rgba(255,255,255,0) 1.3px),radial-gradient(rgba(0,0,0,0.03) 0.6px,rgba(0,0,0,0) 1.3px);background-size:100% 100%,4px 4px,4px 4px;background-position:0 0,0 0,2px 2px;border-top:1px solid #4a4a4a;border-left:1px solid #6a6a6a;box-shadow:inset 2px 2px 3px rgba(0,0,0,0.18),inset -2px 0 3px rgba(0,0,0,0.18)"></div>
<div class="a" style="left:737.5px;top:133px;width:10.5px;height:358px;background:linear-gradient(90deg,#cfcfcf,#dedede 50%,#d2d2d2);border-left:1px solid #5a5a5a"></div>
<div class="a" style="left:738.3px;top:133.5px;width:9px;height:9px;background:#fff;border:1px solid #d6d6d6"></div>
<div class="a" style="left:738.3px;top:144.3px;width:9px;height:19px;background:#f4f4f4;border:1px solid #d0d0d0"></div><div class="a" style="left:741px;top:151.5px;width:4px;height:4px;background:#c4c4c4"></div>
<div class="a" style="left:738.3px;top:482.2px;width:9px;height:9px;background:#fff;border:1px solid #d6d6d6"></div>
<svg style="left:0;top:0" width="750" height="516">
<path d="M740.3 139.8 L742.8 137.3 L745.3 139.8" fill="none" stroke="#444" stroke-width="1"/>
<path d="M740.3 485 L742.8 487.5 L745.3 485" fill="none" stroke="#444" stroke-width="1"/>
</svg>
<div class="a" style="left:205.5px;top:135px;width:328.5px;height:356px;background:#fff;border:1px solid #3a3a3a;border-bottom:none;box-shadow:-1px 0 3px 1px rgba(0,0,0,.3),2px 0 4px 1px rgba(0,0,0,.35)"></div>
<svg style="left:0;top:0" width="750" height="516"><defs><pattern id="spk" patternUnits="userSpaceOnUse" width="14" height="14"><rect width="14" height="14" fill="#2a2a2a"/><ellipse cx="4.53" cy="2.11" rx="0.99" ry="0.48" transform="rotate(96 4.53 2.11)" fill="#fff"/><ellipse cx="5.12" cy="0.81" rx="0.90" ry="0.46" transform="rotate(78 5.12 0.81)" fill="#fff"/><ellipse cx="0.98" cy="1.27" rx="0.85" ry="0.74" transform="rotate(22 0.98 1.27)" fill="#fff"/><ellipse cx="3.13" cy="8.78" rx="1.17" ry="0.65" transform="rotate(71 3.13 8.78)" fill="#fff"/><ellipse cx="13.67" cy="0.65" rx="1.12" ry="0.55" transform="rotate(26 13.67 0.65)" fill="#fff"/><ellipse cx="1.65" cy="4.32" rx="1.09" ry="0.51" transform="rotate(105 1.65 4.32)" fill="#fff"/><ellipse cx="8.94" cy="5.21" rx="0.93" ry="0.47" transform="rotate(11 8.94 5.21)" fill="#fff"/><ellipse cx="2.88" cy="9.53" rx="0.86" ry="0.56" transform="rotate(105 2.88 9.53)" fill="#fff"/><ellipse cx="6.34" cy="4.20" rx="1.08" ry="0.69" transform="rotate(44 6.34 4.20)" fill="#fff"/><ellipse cx="8.04" cy="7.35" rx="1.13" ry="0.71" transform="rotate(52 8.04 7.35)" fill="#fff"/><ellipse cx="13.72" cy="1.65" rx="0.85" ry="0.71" transform="rotate(27 13.72 1.65)" fill="#fff"/><ellipse cx="6.85" cy="0.55" rx="1.00" ry="0.72" transform="rotate(103 6.85 0.55)" fill="#fff"/><ellipse cx="12.26" cy="4.39" rx="1.02" ry="0.66" transform="rotate(104 12.26 4.39)" fill="#fff"/><ellipse cx="6.39" cy="11.76" rx="1.17" ry="0.62" transform="rotate(120 6.39 11.76)" fill="#fff"/><ellipse cx="0.85" cy="9.82" rx="0.99" ry="0.80" transform="rotate(148 0.85 9.82)" fill="#fff"/><ellipse cx="3.98" cy="5.40" rx="1.00" ry="0.46" transform="rotate(83 3.98 5.40)" fill="#fff"/><ellipse cx="2.35" cy="1.64" rx="0.64" ry="0.72" transform="rotate(23 2.35 1.64)" fill="#fff"/><ellipse cx="3.47" cy="5.47" rx="1.12" ry="0.48" transform="rotate(81 3.47 5.47)" fill="#fff"/><ellipse cx="7.69" cy="12.37" rx="1.09" ry="0.75" transform="rotate(50 7.69 12.37)" fill="#fff"/><ellipse cx="5.81" cy="5.02" rx="1.13" ry="0.79" transform="rotate(27 5.81 5.02)" fill="#fff"/><ellipse cx="2.47" cy="3.25" rx="0.74" ry="0.62" transform="rotate(106 2.47 3.25)" fill="#fff"/><ellipse cx="3.68" cy="0.06" rx="0.85" ry="0.58" transform="rotate(102 3.68 0.06)" fill="#fff"/><ellipse cx="13.34" cy="9.67" rx="0.91" ry="0.67" transform="rotate(122 13.34 9.67)" fill="#fff"/><ellipse cx="0.76" cy="12.59" rx="1.07" ry="0.76" transform="rotate(144 0.76 12.59)" fill="#fff"/><ellipse cx="5.49" cy="5.59" rx="0.66" ry="0.67" transform="rotate(11 5.49 5.59)" fill="#fff"/><ellipse cx="0.94" cy="2.92" rx="0.70" ry="0.57" transform="rotate(9 0.94 2.92)" fill="#fff"/><ellipse cx="0.00" cy="2.12" rx="0.66" ry="0.58" transform="rotate(5 0.00 2.12)" fill="#fff"/><ellipse cx="12.24" cy="8.60" rx="0.69" ry="0.54" transform="rotate(63 12.24 8.60)" fill="#fff"/><ellipse cx="5.10" cy="1.72" rx="1.11" ry="0.80" transform="rotate(84 5.10 1.72)" fill="#fff"/><ellipse cx="6.77" cy="1.20" rx="0.66" ry="0.57" transform="rotate(48 6.77 1.20)" fill="#fff"/><ellipse cx="11.60" cy="2.26" rx="0.61" ry="0.78" transform="rotate(95 11.60 2.26)" fill="#fff"/><ellipse cx="2.05" cy="7.60" rx="0.62" ry="0.63" transform="rotate(176 2.05 7.60)" fill="#fff"/><ellipse cx="12.09" cy="9.75" rx="0.76" ry="0.58" transform="rotate(30 12.09 9.75)" fill="#fff"/><ellipse cx="10.81" cy="7.46" rx="1.07" ry="0.57" transform="rotate(40 10.81 7.46)" fill="#fff"/><ellipse cx="11.36" cy="13.79" rx="1.11" ry="0.73" transform="rotate(147 11.36 13.79)" fill="#fff"/><ellipse cx="10.36" cy="3.17" rx="0.91" ry="0.57" transform="rotate(5 10.36 3.17)" fill="#fff"/><ellipse cx="0.39" cy="3.91" rx="0.76" ry="0.69" transform="rotate(172 0.39 3.91)" fill="#fff"/><ellipse cx="6.26" cy="13.12" rx="1.19" ry="0.78" transform="rotate(66 6.26 13.12)" fill="#fff"/><ellipse cx="3.09" cy="3.18" rx="0.72" ry="0.52" transform="rotate(112 3.09 3.18)" fill="#fff"/><ellipse cx="12.60" cy="11.77" rx="0.89" ry="0.68" transform="rotate(144 12.60 11.77)" fill="#fff"/><ellipse cx="1.19" cy="9.25" rx="1.15" ry="0.72" transform="rotate(135 1.19 9.25)" fill="#fff"/><ellipse cx="6.69" cy="2.50" rx="1.07" ry="0.57" transform="rotate(144 6.69 2.50)" fill="#fff"/><ellipse cx="13.60" cy="5.54" rx="0.84" ry="0.78" transform="rotate(130 13.60 5.54)" fill="#fff"/><ellipse cx="2.38" cy="1.78" rx="0.69" ry="0.77" transform="rotate(145 2.38 1.78)" fill="#fff"/><ellipse cx="2.05" cy="11.57" rx="1.19" ry="0.68" transform="rotate(63 2.05 11.57)" fill="#fff"/><ellipse cx="7.68" cy="1.83" rx="0.61" ry="0.79" transform="rotate(117 7.68 1.83)" fill="#fff"/><ellipse cx="7.37" cy="13.07" rx="0.86" ry="0.76" transform="rotate(149 7.37 13.07)" fill="#fff"/><ellipse cx="2.95" cy="3.53" rx="0.78" ry="0.53" transform="rotate(106 2.95 3.53)" fill="#fff"/><ellipse cx="3.63" cy="5.87" rx="0.68" ry="0.77" transform="rotate(64 3.63 5.87)" fill="#fff"/><ellipse cx="6.41" cy="8.17" rx="1.14" ry="0.60" transform="rotate(165 6.41 8.17)" fill="#fff"/><ellipse cx="7.02" cy="7.45" rx="0.91" ry="0.46" transform="rotate(79 7.02 7.45)" fill="#fff"/><ellipse cx="2.56" cy="0.06" rx="1.08" ry="0.51" transform="rotate(85 2.56 0.06)" fill="#fff"/><ellipse cx="10.15" cy="7.79" rx="0.80" ry="0.63" transform="rotate(100 10.15 7.79)" fill="#fff"/><ellipse cx="10.98" cy="1.49" rx="0.94" ry="0.54" transform="rotate(50 10.98 1.49)" fill="#fff"/><ellipse cx="10.81" cy="7.11" rx="0.94" ry="0.72" transform="rotate(164 10.81 7.11)" fill="#fff"/><ellipse cx="6.21" cy="8.58" rx="0.90" ry="0.63" transform="rotate(125 6.21 8.58)" fill="#fff"/><ellipse cx="6.33" cy="7.47" rx="0.89" ry="0.78" transform="rotate(126 6.33 7.47)" fill="#fff"/><ellipse cx="12.27" cy="13.19" rx="0.76" ry="0.65" transform="rotate(170 12.27 13.19)" fill="#fff"/><ellipse cx="11.76" cy="1.92" rx="0.67" ry="0.60" transform="rotate(13 11.76 1.92)" fill="#fff"/><ellipse cx="3.37" cy="1.02" rx="1.00" ry="0.72" transform="rotate(161 3.37 1.02)" fill="#fff"/></pattern><clipPath id="pg"><rect x="206.5" y="136" width="327" height="355"/></clipPath></defs><g clip-path="url(#pg)" fill="none" stroke="#1e1e1e">
<path d="M487.60 168.03 A216.40 216.40 0 0 0 290.84 302.64 L298.06 305.58 A208.60 208.60 0 0 1 487.73 175.83Z" fill="url(#spk)" stroke="none"/>
<path d="M516.10 169.24 A216.60 216.60 0 0 0 290.66 302.56" stroke-width="1.3"/>
<path d="M515.18 177.18 A208.60 208.60 0 0 0 298.06 305.58" stroke-width="1.2"/>
<path d="M486.92 179.84 A204.60 204.60 0 0 0 302.45 305.44" stroke-width="1.1"/>
<path d="M289.37 304.51 A231.60 231.60 0 0 0 312.59 500.73 L320.73 495.64 A222.00 222.00 0 0 1 298.47 307.56Z" fill="url(#spk)" stroke="none"/>
<path d="M285.86 303.34 A235.30 235.30 0 0 0 309.45 502.69" stroke-width="1.2"/>
<path d="M289.18 304.45 A231.80 231.80 0 0 0 312.42 500.84" stroke-width="1.1"/>
<path d="M298.47 307.56 A222.00 222.00 0 0 0 320.73 495.64" stroke-width="1.2"/>
<path d="M285.86 303.34 L298.47 307.56" stroke-width="1.1"/>
<rect x="298.5" y="305" width="4" height="12.5" fill="#1e1e1e" stroke="none"/>
<rect x="293" y="424" width="4.5" height="8.5" fill="#1e1e1e" stroke="none"/>
<path d="M486.80 196.10 A180.40 180.40 0 0 0 348.61 492.46" stroke-width="1.3"/>
<circle cx="487.5" cy="196" r="1.1" fill="#1e1e1e" stroke="none"/>
<path d="M487.6 161.5 L487.6 202" stroke-width="1.2"/>
<path d="M487.6 204 L487.6 491" stroke-width="1.3" stroke-dasharray="7 3"/>
<path d="M377 175.1 L377 491" stroke-width="1.3"/>
<path d="M369.3 300 L369.3 491" stroke-width="0.8" stroke="#cfcfcf"/>
<path d="M375 175.5 L434 175.5" stroke-width="1.2"/>
<circle cx="377" cy="175.1" r="1.1" fill="#1e1e1e" stroke="none"/>
<path d="M301 306.2 L487.6 306.2" stroke-width="2"/>
<path d="M301 318.2 L487.6 318.2" stroke-width="1.5"/>
<path d="M286 381.2 L487.6 381.2" stroke-width="1.4"/>
<path d="M291 419.6 L487.6 419.6" stroke-width="2"/>
<path d="M296 431.4 L487.6 431.4" stroke-width="1.5"/>
<circle cx="377" cy="306.2" r="1.6" fill="#1e1e1e" stroke="none"/>
<circle cx="377" cy="318.2" r="1.6" fill="#1e1e1e" stroke="none"/>
<circle cx="377" cy="419.6" r="1.6" fill="#1e1e1e" stroke="none"/>
<circle cx="377" cy="431.4" r="1.6" fill="#1e1e1e" stroke="none"/>
<path d="M484.5 379 L488 381 L484.5 383" fill="#1e1e1e" stroke="none"/>
<path d="M302 310 L318 315.8" stroke-width="1.2"/><circle cx="318" cy="315.8" r="1.3" fill="#1e1e1e" stroke="none"/>
<path d="M282 415.5 L310 410" stroke-width="1.2"/><circle cx="310" cy="410" r="1.3" fill="#1e1e1e" stroke="none"/>
<path d="M275 280.6 L284 280.6 L294.5 304" stroke-width="1"/>
<path d="M254.5 297.4 L271 297.4 L271 306" stroke-width="0.9"/><path d="M268 306.4 L283.5 306.4" stroke-width="1"/>
<path d="M250 359 L273.5 363.2" stroke-width="1"/><circle cx="273.5" cy="363.2" r="1" fill="#1e1e1e" stroke="none"/>
<path d="M249 412.3 L265.8 412.3 L265.8 420" stroke-width="0.9"/><path d="M262 419.8 L283 419.8" stroke-width="1.3"/>
<path d="M269.7 445 L274.5 445 L285.5 437" stroke-width="1"/>
<path d="M420 292.5 L415.5 292.5 L413.5 305" stroke-width="1"/>
<path d="M420 405.5 L415.5 405.5 L413.5 419" stroke-width="1"/>
<path d="M420 485.5 L415.5 485.5 L408 492" stroke-width="1"/>
<path d="M372 298 Q371.5 303 376 306" stroke-width="0.8"/>
<path d="M291 377 L297.5 377" stroke-width="0.8"/>
<path d="M326 267 L344.5 281.5" stroke-width="1"/>
<rect x="425.0" y="249.0" width="30.4" height="7.4" rx="1.2" fill="#fff" stroke="#d8c8c8" stroke-width="0.6"/>
<rect x="424.8" y="348.7" width="36.0" height="8.9" rx="1.2" fill="#fff" stroke="#d8c8c8" stroke-width="0.6"/>
<rect x="424.4" y="453.8" width="29.9" height="7.5" rx="1.2" fill="#fff" stroke="#d8c8c8" stroke-width="0.6"/>
<rect x="419.0" y="289.7" width="47.3" height="12.0" rx="1.2" fill="#fff" stroke="#d8c8c8" stroke-width="0.6"/>
<rect x="419.4" y="402.4" width="47.0" height="13.5" rx="1.2" fill="#fff" stroke="#d8c8c8" stroke-width="0.6"/>
<rect x="419.4" y="482.6" width="42.3" height="12.4" rx="1.2" fill="#fff" stroke="#d8c8c8" stroke-width="0.6"/>
<rect x="234.2" y="277.9" width="40.8" height="16.3" rx="1.2" fill="#fff" stroke="#d8c8c8" stroke-width="0.6"/>
<rect x="234.2" y="295.1" width="20.0" height="5.4" rx="1.2" fill="#fff" stroke="#d8c8c8" stroke-width="0.6"/>
<rect x="227.4" y="356.0" width="22.6" height="6.0" rx="1.2" fill="#fff" stroke="#d8c8c8" stroke-width="0.6"/>
<rect x="227.4" y="410.0" width="21.6" height="5.0" rx="1.2" fill="#fff" stroke="#d8c8c8" stroke-width="0.6"/>
<rect x="227.7" y="442.3" width="42.0" height="15.4" rx="1.2" fill="#fff" stroke="#d8c8c8" stroke-width="0.6"/>
<rect x="378.7" y="374.8" width="24.6" height="5.6" rx="1.2" fill="#fff" stroke="#d8c8c8" stroke-width="0.6"/>
<rect x="344.5" y="279.0" width="22.5" height="6.0" rx="1.2" fill="#fff" stroke="#d8c8c8" stroke-width="0.6"/>
<rect x="369.5" y="288.0" width="6.0" height="10.5" rx="1.2" fill="#fff" stroke="#d8c8c8" stroke-width="0.6"/>
<rect x="286.0" y="371.0" width="7.0" height="6.4" rx="1.2" fill="#fff" stroke="#d8c8c8" stroke-width="0.6"/>
<g transform="translate(386,224) rotate(-33)"><rect x="-7.5" y="-2.6" width="15.0" height="5.2" rx="1.2" fill="#fff" stroke="#d8c8c8" stroke-width="0.6"/></g>
<g transform="translate(373,246) rotate(-90)"><rect x="-9.0" y="-2.0" width="18.0" height="4.0" rx="1.2" fill="#fff" stroke="#d8c8c8" stroke-width="0.6"/></g>
<g transform="translate(304.4,361.5) rotate(-90)"><rect x="-6.5" y="-3.0" width="13.0" height="6.0" rx="1.2" fill="#fff" stroke="#d8c8c8" stroke-width="0.6"/></g>
</g>
<text x="427.6" y="255.2" font-family="Liberation Sans" font-size="5.4" fill="#303030" letter-spacing="0.00" textLength="25.4" lengthAdjust="spacingAndGlyphs">BEDROOMS</text>
<text x="427.2" y="355.8" font-family="Liberation Sans" font-size="5.4" fill="#303030" letter-spacing="0.00" textLength="31.2" lengthAdjust="spacingAndGlyphs">LIVING ROOM</text>
<text x="427.0" y="460.2" font-family="Liberation Sans" font-size="5.4" fill="#303030" letter-spacing="0.00" textLength="24.8" lengthAdjust="spacingAndGlyphs">BASEMENT</text>
<text x="421.0" y="293.8" font-family="Liberation Sans" font-size="2.7" fill="#2a2a2a" letter-spacing="0.00">SIP 1/2 2X4 PLYWOOD</text>
<text x="421.0" y="297.2" font-family="Liberation Sans" font-size="2.7" fill="#2a2a2a" letter-spacing="0.00">SHEATHING W/ 1/2 GYPSUM</text>
<text x="421.0" y="300.5" font-family="Liberation Sans" font-size="2.7" fill="#2a2a2a" letter-spacing="0.00">JOISTS @ 16" OC MAX</text>
<text x="421.0" y="406.5" font-family="Liberation Sans" font-size="2.7" fill="#2a2a2a" letter-spacing="0.00">SIP 1/2 2X4 PLYWOOD</text>
<text x="421.0" y="410.0" font-family="Liberation Sans" font-size="2.7" fill="#2a2a2a" letter-spacing="0.00">SHEATHING W/ 1/2 GYPSUM</text>
<text x="421.0" y="413.5" font-family="Liberation Sans" font-size="2.7" fill="#2a2a2a" letter-spacing="0.00">JOISTS @ 16" OC MAX</text>
<text x="421.0" y="486.5" font-family="Liberation Sans" font-size="2.7" fill="#2a2a2a" letter-spacing="0.00">1 EACH TOP SILL CURVED</text>
<text x="421.0" y="490.0" font-family="Liberation Sans" font-size="2.7" fill="#2a2a2a" letter-spacing="0.00">LEDGER CUT ANCHOR</text>
<text x="236.0" y="281.5" font-family="Liberation Sans" font-size="2.7" fill="#2a2a2a" letter-spacing="0.00">1 EACH TOP SILL CURVED</text>
<text x="236.0" y="285.0" font-family="Liberation Sans" font-size="2.7" fill="#2a2a2a" letter-spacing="0.00">LEDGER CUT ANCHOR</text>
<text x="236.0" y="288.5" font-family="Liberation Sans" font-size="2.7" fill="#2a2a2a" letter-spacing="0.00">BOLTS EAST INTO CONC</text>
<text x="236.0" y="292.0" font-family="Liberation Sans" font-size="2.7" fill="#2a2a2a" letter-spacing="0.00">CORBEL</text>
<text x="236.0" y="299.0" font-family="Liberation Sans" font-size="2.7" fill="#2a2a2a" letter-spacing="0.00">POUR JOINT</text>
<text x="229.5" y="360.3" font-family="Liberation Sans" font-size="2.7" fill="#2a2a2a" letter-spacing="0.00">FORM SET AI</text>
<text x="346.5" y="283.2" font-family="Liberation Sans" font-size="2.7" fill="#2a2a2a" letter-spacing="0.00">FORM SET AI</text>
<text x="229.5" y="413.8" font-family="Liberation Sans" font-size="2.7" fill="#2a2a2a" letter-spacing="0.00">POUR JOINT</text>
<text x="229.5" y="446.2" font-family="Liberation Sans" font-size="2.7" fill="#2a2a2a" letter-spacing="0.00">1 EACH TOP SILL CURVED</text>
<text x="229.5" y="449.5" font-family="Liberation Sans" font-size="2.7" fill="#2a2a2a" letter-spacing="0.00">LEDGER CUT ANCHOR</text>
<text x="229.5" y="453.0" font-family="Liberation Sans" font-size="2.7" fill="#2a2a2a" letter-spacing="0.00">BOLTS EAST INTO CONC</text>
<text x="229.5" y="456.3" font-family="Liberation Sans" font-size="2.7" fill="#2a2a2a" letter-spacing="0.00">CORBEL</text>
<text x="380.5" y="378.8" font-family="Liberation Sans" font-size="2.7" fill="#2a2a2a" letter-spacing="0.00">W - 4" FINISH</text>
<text x="375.0" y="254.0" font-family="Liberation Sans" font-size="2.7" fill="#2a2a2a" letter-spacing="0.00" transform="rotate(-90.0 375.0 254.0)">11' - 1 3/4"</text>
<text x="375.0" y="374.0" font-family="Liberation Sans" font-size="2.7" fill="#2a2a2a" letter-spacing="0.00" transform="rotate(-90.0 375.0 374.0)">8' - 10 1/2"</text>
<text x="375.0" y="484.0" font-family="Liberation Sans" font-size="2.7" fill="#2a2a2a" letter-spacing="0.00" transform="rotate(-90.0 375.0 484.0)">8' - 10 1/2"</text>
<text x="375.0" y="430.0" font-family="Liberation Sans" font-size="2.7" fill="#2a2a2a" letter-spacing="0.00" transform="rotate(-90.0 375.0 430.0)">1' - 10"</text>
<text x="375.0" y="318.0" font-family="Liberation Sans" font-size="2.7" fill="#2a2a2a" letter-spacing="0.00" transform="rotate(-90.0 375.0 318.0)">1' - 10"</text>
<text x="380.0" y="228.0" font-family="Liberation Sans" font-size="2.7" fill="#2a2a2a" letter-spacing="0.00" transform="rotate(-33.0 380.0 228.0)">R' 5'-6"</text>
<text x="306.0" y="367.0" font-family="Liberation Sans" font-size="2.7" fill="#2a2a2a" letter-spacing="0.00" transform="rotate(-90.0 306.0 367.0)">4' - 4"</text>
</svg>
<div class="a" style="left:2px;top:491px;width:746px;height:2px;background:#e6e6e6"></div>
<div class="a" style="left:2px;top:493px;width:746px;height:20px;background:#f5f5f5"></div>
<div class="a" style="left:2px;top:513px;width:746px;height:1px;background:#cdcdcd"></div>
<svg style="left:0;top:0" width="750" height="516">
<rect x="3.5" y="495.0" width="3.5" height="1.6" fill="#dcdcdc"/><rect x="3.5" y="497.5" width="3.5" height="1.6" fill="#dcdcdc"/><rect x="3.5" y="500.0" width="3.5" height="1.6" fill="#dcdcdc"/><rect x="3.5" y="502.5" width="3.5" height="1.6" fill="#dcdcdc"/><path d="M3.5 506.5 L3.5 511.5 M4.5 509 L7.0 506.8 L7.0 511.2Z" stroke="#888" stroke-width="0.8" fill="#888"/>
<rect x="212.5" y="495.0" width="3.5" height="1.6" fill="#dcdcdc"/><rect x="212.5" y="497.5" width="3.5" height="1.6" fill="#dcdcdc"/><rect x="212.5" y="500.0" width="3.5" height="1.6" fill="#dcdcdc"/><rect x="212.5" y="502.5" width="3.5" height="1.6" fill="#dcdcdc"/><path d="M212.5 506.5 L212.5 511.5 M213.5 509 L216.0 506.8 L216.0 511.2Z" stroke="#888" stroke-width="0.8" fill="#888"/>
<rect x="408.0" y="495.0" width="3.5" height="1.6" fill="#dcdcdc"/><rect x="408.0" y="497.5" width="3.5" height="1.6" fill="#dcdcdc"/><rect x="408.0" y="500.0" width="3.5" height="1.6" fill="#dcdcdc"/><rect x="408.0" y="502.5" width="3.5" height="1.6" fill="#dcdcdc"/><path d="M408.0 506.5 L408.0 511.5 M409.0 509 L411.5 506.8 L411.5 511.2Z" stroke="#888" stroke-width="0.8" fill="#888"/>
<rect x="522.0" y="495.0" width="3.5" height="1.6" fill="#dcdcdc"/><rect x="522.0" y="497.5" width="3.5" height="1.6" fill="#dcdcdc"/><rect x="522.0" y="500.0" width="3.5" height="1.6" fill="#dcdcdc"/><rect x="522.0" y="502.5" width="3.5" height="1.6" fill="#dcdcdc"/><path d="M522.0 506.5 L522.0 511.5 M523.0 509 L525.5 506.8 L525.5 511.2Z" stroke="#888" stroke-width="0.8" fill="#888"/>
<rect x="705.5" y="495.0" width="3.5" height="1.6" fill="#dcdcdc"/><rect x="705.5" y="497.5" width="3.5" height="1.6" fill="#dcdcdc"/><rect x="705.5" y="500.0" width="3.5" height="1.6" fill="#dcdcdc"/><rect x="705.5" y="502.5" width="3.5" height="1.6" fill="#dcdcdc"/><path d="M705.5 506.5 L705.5 511.5 M706.5 509 L709.0 506.8 L709.0 511.2Z" stroke="#888" stroke-width="0.8" fill="#888"/>
<path d="M18.36 499.26 L19.74 499.52 L19.74 501.08 L18.36 501.34 L17.99 502.22 L18.79 503.38 L17.68 504.49 L16.52 503.69 L15.64 504.06 L15.38 505.44 L13.82 505.44 L13.56 504.06 L12.68 503.69 L11.52 504.49 L10.41 503.38 L11.21 502.22 L10.84 501.34 L9.46 501.08 L9.46 499.52 L10.84 499.26 L11.21 498.38 L10.41 497.22 L11.52 496.11 L12.68 496.91 L13.56 496.54 L13.82 495.16 L15.38 495.16 L15.64 496.54 L16.52 496.91 L17.68 496.11 L18.79 497.22 L17.99 498.38Z" fill="#8f8373"/><circle cx="14.60" cy="500.30" r="2.10" fill="#f5f5f5"/>
<path d="M25.56 505.56 L26.94 505.82 L26.94 507.38 L25.56 507.64 L25.19 508.52 L25.99 509.68 L24.88 510.79 L23.72 509.99 L22.84 510.36 L22.58 511.74 L21.02 511.74 L20.76 510.36 L19.88 509.99 L18.72 510.79 L17.61 509.68 L18.41 508.52 L18.04 507.64 L16.66 507.38 L16.66 505.82 L18.04 505.56 L18.41 504.68 L17.61 503.52 L18.72 502.41 L19.88 503.21 L20.76 502.84 L21.02 501.46 L22.58 501.46 L22.84 502.84 L23.72 503.21 L24.88 502.41 L25.99 503.52 L25.19 504.68Z" fill="#f6a623"/><circle cx="21.80" cy="506.60" r="2.10" fill="#fff"/>
<path d="M70.30 502.30 L74.30 502.30 L72.30 504.50Z" fill="#444"/>
<rect x="78" y="495" width="1" height="17" fill="#dedede"/>
<path d="M86.5 500.5 L92.5 500.5 L92.5 507.5 L86.5 507.5 Z" fill="none" stroke="#6a6a6a" stroke-width="0.9"/>
<path d="M84 509 L84 502 M83 503 L84 501.8 L85 503" stroke="#555" stroke-width="0.8" fill="none"/>
<path d="M86 499 L93.5 499 M92.3 498 L93.5 499 L92.3 500" stroke="#555" stroke-width="0.8" fill="none"/>
<rect x="145.3" y="495" width="1" height="17" fill="#dedede"/>
<path d="M148.5 504 L157 504 M152.7 499 L152.7 509" stroke="#777" stroke-width="1"/>
<path d="M154 505 L154 510 L155.5 508.7 L157 510.5 L158.7 508.5 Z" fill="#666"/>
<circle cx="227.3" cy="504.1" r="7.4" fill="#fbfbfb" stroke="#d6cec4" stroke-width="1"/>
<path d="M224 500.5 L224 507.5 M230.5 500.5 L227 504 L230.5 507.5" stroke="#9cc8ee" stroke-width="1.3" fill="none"/>
<circle cx="246.7" cy="504.1" r="7.4" fill="#fbfbfb" stroke="#d6cec4" stroke-width="1"/>
<path d="M248.3 500.5 L244.8 504 L248.3 507.5" stroke="#9cc8ee" stroke-width="1.3" fill="none"/>
<rect x="258.5" y="496" width="61.8" height="14.3" rx="1.5" fill="#fff" stroke="#a8a8a8" stroke-width="1"/>
<circle cx="331.6" cy="504.1" r="7.4" fill="#fbfbfb" stroke="#a89c8c" stroke-width="1"/>
<path d="M330 500.5 L333.5 504 L330 507.5" stroke="#3d8fd6" stroke-width="1.4" fill="none"/>
<circle cx="351.0" cy="504.1" r="7.4" fill="#fbfbfb" stroke="#a89c8c" stroke-width="1"/>
<path d="M348 500.5 L351.5 504 L348 507.5 M354.5 500.5 L354.5 507.5" stroke="#3d8fd6" stroke-width="1.4" fill="none"/>
<rect x="363" y="495" width="1" height="17" fill="#dedede"/>
<circle cx="375.7" cy="504.1" r="7.4" fill="#fbfbfb" stroke="#a89c8c" stroke-width="1"/>
<path d="M371.8 504.1 L379.8 504.1 M374.8 501 L371.8 504.1 L374.8 507.2" stroke="#7bb233" stroke-width="1.5" fill="none"/>
<circle cx="395.0" cy="504.1" r="7.4" fill="#fbfbfb" stroke="#d6cec4" stroke-width="1"/>
<path d="M399 504.1 L391 504.1 M396 501 L399 504.1 L396 507.2" stroke="#b4d890" stroke-width="1.5" fill="none"/>
<path d="M417.5 496.5 L425.0 496.5 L428.5 500.0 L428.5 510.0 L417.5 510.0 Z" fill="#fff" stroke="#8a7e70" stroke-width="1"/><path d="M425.0 496.5 L428.5 500.0 L425.5 499.5 Z" fill="#5b4f43"/>
<rect x="432.8" y="493.8" width="19" height="18.5" rx="1.5" fill="#fce7a2" stroke="#d2ad60" stroke-width="1"/>
<path d="M436.5 494.5 L436.5 501 L448 501 L448 494.5 M436.5 511.5 L436.5 504 L444.5 504 L448 507.5 L448 511.5" fill="none" stroke="#8a7e70" stroke-width="1.1"/>
<path d="M444.5 504 L448 507.5 L444.8 507.2Z" fill="#5b4f43"/>
<path d="M454.0 497.0 L459.0 497.0 L462.0 500.0 L462.0 509.5 L454.0 509.5 Z" fill="#fff" stroke="#8a7e70" stroke-width="1"/><path d="M459.0 497.0 L462.0 500.0 L459.5 499.5 Z" fill="#5b4f43"/>
<path d="M463.0 497.0 L468.0 497.0 L471.0 500.0 L471.0 509.5 L463.0 509.5 Z" fill="#fff" stroke="#8a7e70" stroke-width="1"/><path d="M468.0 497.0 L471.0 500.0 L468.5 499.5 Z" fill="#5b4f43"/>
<path d="M474 494 L474 500 L480.5 500 L480.5 494 M483 494 L483 500 L489.5 500 L489.5 494" fill="none" stroke="#8a7e70" stroke-width="1"/>
<path d="M474 511 L474 503.5 L478 503.5 L480.5 506 L480.5 511 M483 511 L483 503.5 L487 503.5 L489.5 506 L489.5 511" fill="none" stroke="#8a7e70" stroke-width="1"/>
<path d="M478 503.5 L480.5 506 L478 506Z M487 503.5 L489.5 506 L487 506Z" fill="#5b4f43"/>
<rect x="529.5" y="496" width="56" height="14.3" rx="1.5" fill="#fff" stroke="#a8a8a8" stroke-width="1"/>
<path d="M577.00 501.50 L582.00 501.50 L579.50 504.10Z" fill="#555"/>
<rect x="589" y="495" width="1" height="17" fill="#dedede"/>
<defs><linearGradient id="zg" x1="0" y1="0" x2="0" y2="1"><stop offset="0.5" stop-color="#fdfbf8"/><stop offset="0.5" stop-color="#fbe5c4"/></linearGradient></defs>
<circle cx="601" cy="504" r="7.6" fill="url(#zg)" stroke="#a89c8c" stroke-width="1.1"/>
<path d="M597 504 L605 504" stroke="#3d8fd6" stroke-width="1.4"/>
<rect x="613" y="503.7" width="70" height="1" fill="#b8b8b8"/>
<rect x="644.8" y="495.3" width="5" height="16.2" rx="2" fill="#fafafa" stroke="#9a9a9a" stroke-width="1"/>
<circle cx="693.7" cy="503.8" r="7.6" fill="url(#zg)" stroke="#a89c8c" stroke-width="1.1"/>
<path d="M689.7 503.8 L697.7 503.8 M693.7 499.8 L693.7 507.8" stroke="#3d8fd6" stroke-width="1.4"/>
<rect x="713.5" y="499.3" width="11" height="8.3" fill="#fff" stroke="#8aaee0" stroke-width="1"/><rect x="713.5" y="499.3" width="11" height="1.6" fill="#8aaee0"/>
<path d="M734.00 502.20 L737.60 502.20 L735.80 504.20Z" fill="#888"/>
<path d="M741.5 493.5 L746.5 493.5 M742 495 L744 497 L746 495 M741.5 498 L746.5 498" stroke="#555" stroke-width="0.9" fill="none"/>
</svg>
<div class="t" style="left:29.90px;top:500.28px;font-size:9.00px;line-height:9.00px;color:#262626;font-weight:normal;transform:scaleX(0.9109);">Options...</div>
<div class="t" style="left:94.20px;top:496.16px;font-size:8.20px;line-height:8.20px;color:#262626;font-weight:normal;transform:scaleX(1.0353);">W: 123.1mm</div>
<div class="t" style="left:94.20px;top:504.96px;font-size:8.20px;line-height:8.20px;color:#262626;font-weight:normal;transform:scaleX(1.0741);">H: 183.1mm</div>
<div class="t" style="left:160.90px;top:496.16px;font-size:8.20px;line-height:8.20px;color:#262626;font-weight:normal;transform:scaleX(0.8786);">X :</div>
<div class="t" style="left:160.90px;top:504.96px;font-size:8.20px;line-height:8.20px;color:#262626;font-weight:normal;transform:scaleX(0.8911);">Y :</div>
<div class="t" style="left:305.00px;top:500.88px;font-size:9.00px;line-height:9.00px;color:#262626;font-weight:normal;transform:scaleX(0.7178);">1</div>
<div class="t" style="left:309.60px;top:500.88px;font-size:9.00px;line-height:9.00px;color:#777;font-weight:normal;transform:scaleX(1.3516);">/</div>
<div class="t" style="left:314.00px;top:499.02px;font-size:6.00px;line-height:6.00px;color:#777;font-weight:normal;transform:scaleX(1.0766);">8</div>
<div class="t" style="left:531.60px;top:500.48px;font-size:9.00px;line-height:9.00px;color:#262626;font-weight:normal;transform:scaleX(0.8423);">100%</div>
<div class="a" style="left:570.8px;top:102.3px;width:121.6px;height:90.6px;background:#f6f6f6;border:1px solid #7a7a7a;box-shadow:1px 1px 2px 1px rgba(0,0,0,0.3)"></div>
<div class="a" style="left:574.3px;top:106.1px;width:114.7px;height:19.4px;border:1px solid #e0c274;border-radius:2px;background:linear-gradient(#fdf2cc,#fde7a0 60%,#fde9a8)"></div>
<div class="a" style="left:576.2px;top:167px;width:111.8px;height:1px;background:#dcdcdc"></div>
<svg style="left:0;top:0" width="750" height="200">
<path d="M586.0 108.5 L594.0 108.5 L597.5 112.0 L597.5 122.0 L586.0 122.0 Z" fill="#fff" stroke="#8a7e70" stroke-width="1"/><path d="M594.0 108.5 L597.5 112.0 L594.3 111.7 Z" fill="#5b4f43"/><rect x="588.0" y="112.0" width="3" height="0.8" fill="#b8aa9a"/><rect x="588.0" y="114.0" width="6" height="0.8" fill="#b8aa9a"/><path d="M589.60 115.50 L589.00 120.50 M591.80 115.50 L591.20 120.50 M588.00 117.10 L593.00 117.10 M587.80 119.10 L592.80 119.10" stroke="#3d8fd6" stroke-width="0.9"/>
<circle cx="598.0" cy="120.3" r="4" fill="#7fb341" stroke="#fff" stroke-width="0.8"/><path d="M595.7 120.3 L600.3 120.3 M598.0 118.0 L598.0 122.6" stroke="#fff" stroke-width="1.3"/>
<path d="M585.5 140 L585.5 127.5 L593 127.5" fill="none" stroke="#a89c8c" stroke-width="1"/>
<rect x="586" y="128" width="8" height="12" fill="#e0dad2"/>
<path d="M588.2 129.6 L595.7 129.6 L599.2 133.1 L599.2 142.4 L588.2 142.4 Z" fill="#fff" stroke="#8a7e70" stroke-width="1"/><path d="M595.7 129.6 L599.2 133.1 L596.0 132.8 Z" fill="#5b4f43"/><rect x="590.2" y="133.1" width="3" height="0.8" fill="#b8aa9a"/><rect x="590.2" y="135.1" width="6" height="0.8" fill="#b8aa9a"/><path d="M591.80 136.60 L591.20 141.60 M594.00 136.60 L593.40 141.60 M590.20 138.20 L595.20 138.20 M590.00 140.20 L595.00 140.20" stroke="#3d8fd6" stroke-width="0.9"/>
<circle cx="598.3" cy="140.2" r="4" fill="#7fb341" stroke="#fff" stroke-width="0.8"/><path d="M596.0 140.2 L600.6 140.2 M598.3 137.9 L598.3 142.5" stroke="#fff" stroke-width="1.3"/>
<path d="M586.0 147.5 L594.0 147.5 L597.5 151.0 L597.5 161.0 L586.0 161.0 Z" fill="#fff" stroke="#8a7e70" stroke-width="1"/><path d="M594.0 147.5 L597.5 151.0 L594.3 150.7 Z" fill="#5b4f43"/><rect x="588.0" y="151.0" width="3" height="0.8" fill="#b8aa9a"/><rect x="588.0" y="153.0" width="6" height="0.8" fill="#b8aa9a"/><path d="M589.60 154.50 L589.00 159.50 M591.80 154.50 L591.20 159.50 M588.00 156.10 L593.00 156.10 M587.80 158.10 L592.80 158.10" stroke="#3d8fd6" stroke-width="0.9"/>
<rect x="596" y="156.8" width="5.2" height="6.3" fill="#ee5a2a"/><rect x="595.3" y="155.6" width="6.6" height="1.1" fill="#ee5a2a"/>
<path d="M586.0 172.3 L594.0 172.3 L597.5 175.8 L597.5 185.8 L586.0 185.8 Z" fill="#fff" stroke="#8a7e70" stroke-width="1"/><path d="M594.0 172.3 L597.5 175.8 L594.3 175.5 Z" fill="#5b4f43"/><rect x="588.0" y="175.8" width="3" height="0.8" fill="#b8aa9a"/><rect x="588.0" y="177.8" width="6" height="0.8" fill="#b8aa9a"/><path d="M589.60 179.30 L589.00 184.30 M591.80 179.30 L591.20 184.30 M588.00 180.90 L593.00 180.90 M587.80 182.90 L592.80 182.90" stroke="#3d8fd6" stroke-width="0.9"/>
<path d="M601.79 183.67 L602.95 183.87 L602.95 185.13 L601.79 185.33 L601.50 186.03 L602.18 186.99 L601.29 187.88 L600.33 187.20 L599.63 187.49 L599.43 188.65 L598.17 188.65 L597.97 187.49 L597.27 187.20 L596.31 187.88 L595.42 186.99 L596.10 186.03 L595.81 185.33 L594.65 185.13 L594.65 183.87 L595.81 183.67 L596.10 182.97 L595.42 182.01 L596.31 181.12 L597.27 181.80 L597.97 181.51 L598.17 180.35 L599.43 180.35 L599.63 181.51 L600.33 181.80 L601.29 181.12 L602.18 182.01 L601.50 182.97Z" fill="#7a7264"/><circle cx="598.80" cy="184.50" r="1.60" fill="#fff"/>
</svg>
<div class="t" style="left:603.70px;top:112.58px;font-size:9.00px;line-height:9.00px;color:#262626;font-weight:normal;transform:scaleX(0.9483);">Add...</div>
<div class="t" style="left:603.70px;top:131.98px;font-size:9.00px;line-height:9.00px;color:#262626;font-weight:normal;transform:scaleX(0.9407);">Add to Multiple Files...</div>
<div class="t" style="left:603.70px;top:151.28px;font-size:9.00px;line-height:9.00px;color:#262626;font-weight:normal;transform:scaleX(0.9146);">Remove All...</div>
<div class="t" style="left:603.70px;top:175.88px;font-size:9.00px;line-height:9.00px;color:#262626;font-weight:normal;transform:scaleX(0.9118);">Manage...</div>
</body></html>
